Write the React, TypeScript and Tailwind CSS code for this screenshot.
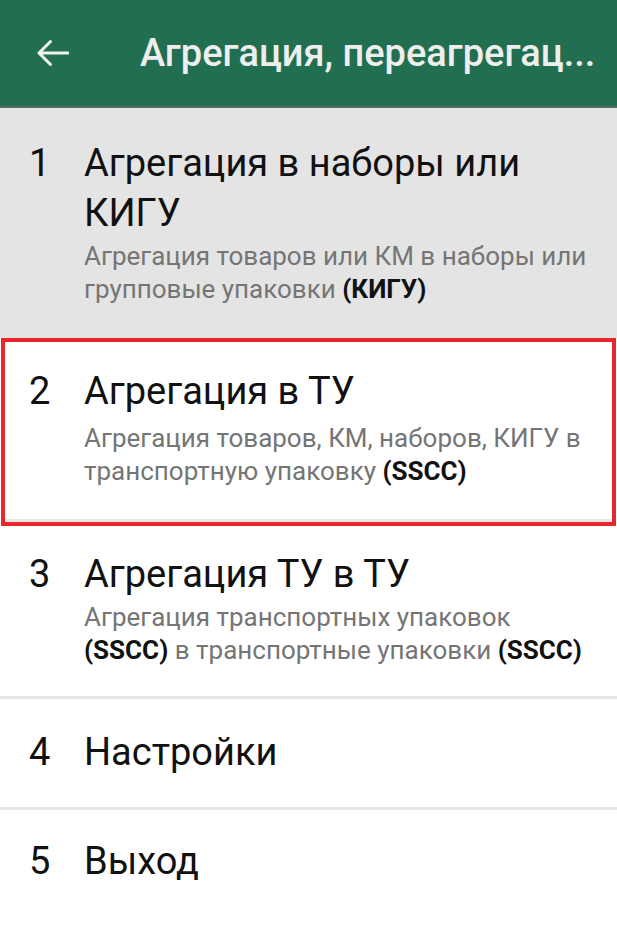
const font = { fontFamily: 'Roboto, "Noto Sans", sans-serif' };

type Item = {
  n: number;
  title: React.ReactNode;
  sub?: React.ReactNode;
};

const B = ({ children }: { children: React.ReactNode }) => (
  <span className="font-bold text-[#111]">{children}</span>
);

const items: Item[] = [
  {
    n: 1,
    title: <>Агрегация в наборы или<br />КИГУ</>,
    sub: <>Агрегация товаров или КМ в наборы или<br />групповые упаковки <B>(КИГУ)</B></>,
  },
  {
    n: 2,
    title: <>Агрегация в ТУ</>,
    sub: <>Агрегация товаров, КМ, наборов, КИГУ в<br />транспортную упаковку <B>(SSCC)</B></>,
  },
  {
    n: 3,
    title: <>Агрегация ТУ в ТУ</>,
    sub: <>Агрегация транспортных упаковок<br /><B>(SSCC)</B> в транспортные упаковки <B>(SSCC)</B></>,
  },
  { n: 4, title: <>Настройки</> },
  { n: 5, title: <>Выход</> },
];

function Row({ item, className, subTop = 'mt-[2px]' }: { item: Item; className: string; subTop?: string }) {
  return (
    <div className={`flex ${className}`}>
      <div className="w-[84px] pl-[29px] shrink-0 text-[38px] leading-[50px] text-[#111]">{item.n}</div>
      <div className="whitespace-nowrap">
        <div className="text-[38px] leading-[50px] text-[#111]">{item.title}</div>
        {item.sub && (
          <div className={`text-[26px] leading-[33px] text-[#757575] ${subTop}`}>{item.sub}</div>
        )}
      </div>
    </div>
  );
}

export default function App() {
  return (
    <div className="w-[617px] h-[946px] bg-white overflow-hidden" style={font}>
      <header className="h-[106px] bg-[#226e50] flex items-center">
        <svg width="32" height="28" viewBox="0 0 32 28" className="ml-[37px]" fill="none" stroke="#f2f2f2" strokeWidth="3" strokeLinecap="round" strokeLinejoin="round">
          <path d="M2 14H31M13.5 2.5L2 14l11.5 11.5" />
        </svg>
        <div className="ml-[71px] text-[38px] font-medium text-[#eeeeee] whitespace-nowrap">Агрегация, переагрегац...</div>
      </header>
      <div className="h-[2px] bg-[#566a60]" />
      <Row item={items[0]} className="bg-[#e4e4e4] pt-[30px] pb-[32px]" />
      <div className="border-[4px] border-[#e8262b] mx-[1px]">
        <Row item={items[1]} className="pt-[24px] pb-[31px] -ml-[5px]" subTop="mt-[6px]" />
        <div className="h-[3px] bg-[#e6e6e6]" />
      </div>
      <Row item={items[2]} className="pt-[23px] pb-[29px]" />
      <div className="h-[3px] bg-[#e6e6e6]" />
      <Row item={items[3]} className="pt-[28px] pb-[30px]" />
      <div className="h-[3px] bg-[#e6e6e6]" />
      <Row item={items[4]} className="pt-[26px] pb-[30px]" />
    </div>
  );
}
